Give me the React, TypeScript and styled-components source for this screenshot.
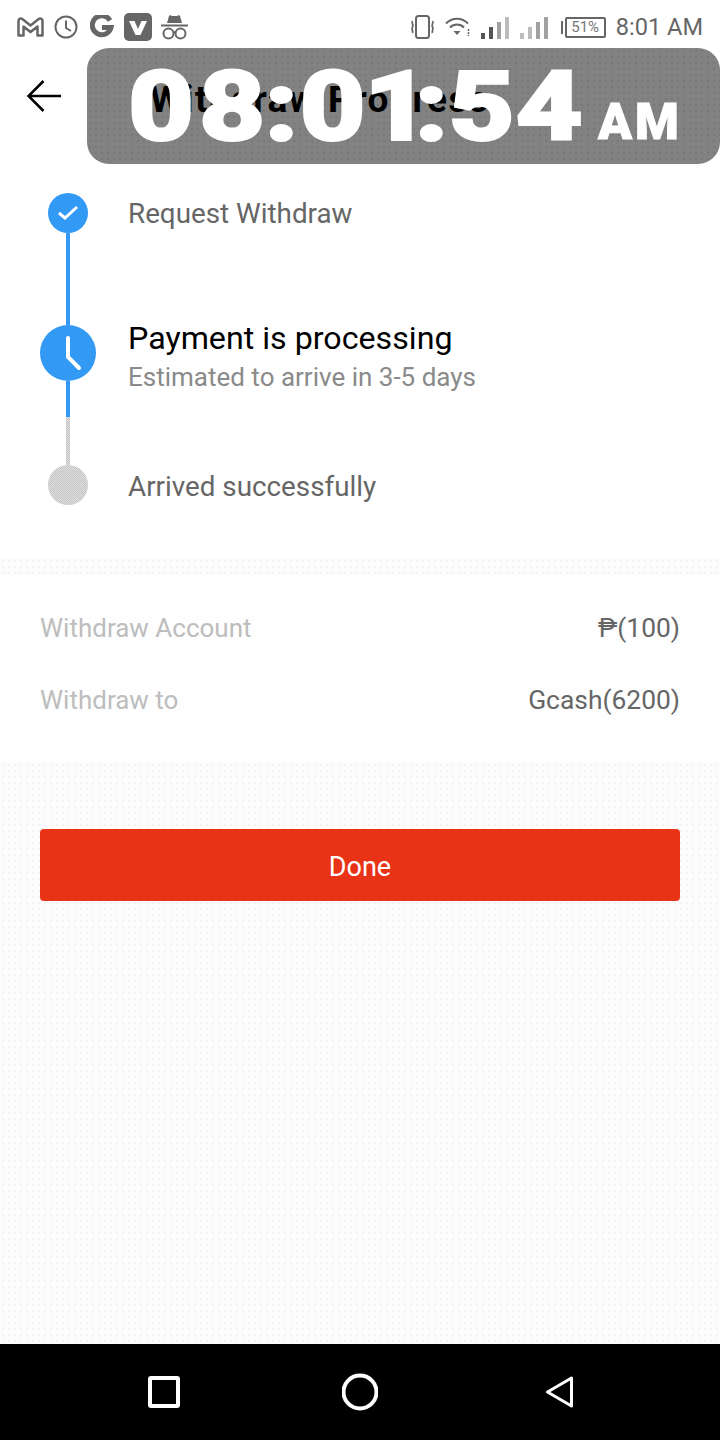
import React from "react";
import styled, { createGlobalStyle, css } from "styled-components";

const GlobalStyle = createGlobalStyle`
  html, body {
    margin: 0;
    padding: 0;
    background: #fcfcfc;
  }
  * {
    box-sizing: border-box;
  }
`;

// the capture is a dithered gif, light areas carry a sparse dot pattern
const lightDither = css`
  background-color: #fcfcfc;
  background-image: radial-gradient(#f3f3f3 0.8px, transparent 1px);
  background-size: 6px 6px;
`;

const greyDither = css`
  background-color: #d4d4d4;
  background-image: repeating-conic-gradient(#c8c8c8 0 25%, #dcdcdc 0 50%);
  background-size: 2px 2px;
`;

const Page = styled.div`
  position: relative;
  width: 720px;
  height: 1440px;
  display: flex;
  flex-direction: column;
  overflow: hidden;
  ${lightDither}
  font-family: Roboto, "Liberation Sans", sans-serif;
`;

const StatusBar = styled.div`
  height: 48px;
  flex-shrink: 0;
  display: flex;
  align-items: center;
  justify-content: space-between;
  padding: 6px 17px 0 17px;
  background: #fff;
  color: #666;
`;

const StatusGroup = styled.div`
  display: flex;
  align-items: center;
`;

const StatusIconSlot = styled.span<{ $after: number }>`
  display: flex;
  margin-right: ${(p) => p.$after}px;
`;

const StatusTime = styled.span`
  font-size: 23.6px;
  margin-left: 10px;
  color: #666;
  white-space: nowrap;
`;

const Header = styled.div`
  height: 116px;
  flex-shrink: 0;
  display: flex;
  align-items: center;
  padding: 0 0 20px 27px;
  background: #fff;
`;

const BackIcon = styled.svg`
  width: 34px;
  height: 32px;
  flex-shrink: 0;
`;

const Title = styled.h1`
  position: relative;
  z-index: 2;
  margin: 7px 0 0 89px;
  font-size: 37px;
  font-weight: 700;
  letter-spacing: 1.4px;
  color: #000;
  white-space: nowrap;
`;

const ClockBackdrop = styled.div`
  position: absolute;
  z-index: 1;
  top: 48px;
  left: 87px;
  right: 0;
  height: 116px;
  border-radius: 22px;
  background-color: #828282;
  background-image: radial-gradient(#787878 0.8px, transparent 1px);
  background-size: 6px 6px;
`;

const ClockFace = styled.div`
  position: absolute;
  z-index: 3;
  top: 49px;
  left: 125px;
  height: 116px;
  display: flex;
  align-items: baseline;
  color: #fff;
  font-weight: 700;
  line-height: 116px;
`;

const ClockGlyph = styled.span<{ $width: number }>`
  display: inline-block;
  width: ${(p) => p.$width}px;
  text-align: center;
  font-size: 94px;
  transform: scaleX(1.2);
  -webkit-text-stroke: 4px #fff;
`;

const ClockPeriod = styled.span`
  margin-left: 8px;
  font-size: 50px;
  font-weight: 900;
  letter-spacing: 3px;
  -webkit-text-stroke: 1px #fff;
`;

const Timeline = styled.section`
  flex-shrink: 0;
  padding: 29px 0 53px 40px;
  background: #fff;
`;

const Step = styled.div<{ $height: number }>`
  display: flex;
  gap: 32px;
  height: ${(p) => p.$height}px;
`;

const Rail = styled.div`
  width: 56px;
  flex-shrink: 0;
  display: flex;
  flex-direction: column;
  align-items: center;
`;

const Dot = styled.div<{ $size: number; $active?: boolean }>`
  width: ${(p) => p.$size}px;
  height: ${(p) => p.$size}px;
  flex-shrink: 0;
  border-radius: 50%;
  display: flex;
  align-items: center;
  justify-content: center;
  ${(p) => (p.$active ? "background: #3299f5;" : greyDither)}
`;

const Connector = styled.div<{ $length: number; $active?: boolean }>`
  width: 4px;
  height: ${(p) => p.$length}px;
  flex-shrink: 0;
  ${(p) => (p.$active ? "background: #3299f5;" : greyDither)}
`;

const StepLabel = styled.div<{ $nudge?: number }>`
  height: 40px;
  line-height: ${(p) => 42 + (p.$nudge ?? 0)}px;
  font-size: 27.8px;
  color: #666;
`;

const StepBody = styled.div`
  display: flex;
  flex-direction: column;
`;

const StepTitle = styled.div`
  margin-top: -5px;
  font-size: 32.2px;
  line-height: 36px;
  color: #000;
`;

const StepHint = styled.div`
  margin-top: 6px;
  font-size: 26px;
  line-height: 30px;
  color: #8a8a8a;
`;

const Divider = styled.div`
  height: 16px;
  flex-shrink: 0;
  ${lightDither}
`;

const Details = styled.section`
  flex-shrink: 0;
  padding: 18px 40px 26px;
  background: #fefefe;
`;

const DetailRow = styled.div`
  height: 72px;
  display: flex;
  align-items: center;
  justify-content: space-between;
`;

const DetailName = styled.span`
  font-size: 26px;
  color: #bdbdbd;
`;

const DetailValue = styled.span`
  font-size: 26.4px;
  color: #666;
`;

const DoneButton = styled.button`
  display: block;
  flex-shrink: 0;
  height: 72px;
  margin: 67px 40px 0;
  padding: 3px 0 0;
  border: 0;
  border-radius: 4px;
  background: #e83317;
  color: #fff;
  font: inherit;
  font-size: 27px;
`;

const NavBar = styled.nav`
  margin-top: auto;
  height: 96px;
  flex-shrink: 0;
  display: flex;
  align-items: center;
  justify-content: space-between;
  padding: 0 146px 0 146px;
  background: #000;
`;

const NavIcon = styled.svg`
  width: 36px;
  height: 40px;
`;

const Battery = styled.div`
  position: relative;
  width: 41px;
  height: 21px;
  margin-left: 6px;
  border: 2px solid #666;
  border-radius: 2px;
  display: flex;
  align-items: center;
  justify-content: center;
  font-size: 15px;
  color: #777;

  &::before {
    content: "";
    position: absolute;
    left: -6px;
    top: 2px;
    width: 2px;
    height: 13px;
    background: #666;
  }
`;

const GmailIcon = () => (
  <svg width="27" height="20" viewBox="0 0 27 20" fill="none" stroke="#666" strokeWidth="2.500" strokeLinejoin="round">
    <path d="M1.500 18.500V4c0-2.500 2.500-3 3.800-2l8.200 6.500L21.700 2c1.300-1 3.800-.5 3.800 2v14.500h-5V9.500l-7 5.500-7-5.500v9z" />
  </svg>
);

const ClockIcon = () => (
  <svg width="24" height="24" viewBox="0 0 24 24" fill="none" stroke="#666" strokeWidth="2">
    <circle cx="12" cy="12" r="10.500" />
    <path d="M12 5.500V13l5 3" />
  </svg>
);

const GoogleIcon = () => (
  <svg width="24" height="24" viewBox="0 0 24 24" fill="none" stroke="#666" strokeWidth="5">
    <path d="M20 5.500A9.500 9.500 0 1 0 21 12.500H12" />
  </svg>
);

const VpnIcon = () => (
  <svg width="28" height="28" viewBox="0 0 28 28">
    <rect width="28" height="28" rx="5" fill="#666" />
    <path d="M5 8h5.500l3.500 8 3.500-8H23l-6.500 14h-5z" fill="#fff" />
  </svg>
);

const IncognitoIcon = () => (
  <svg width="27" height="26" viewBox="0 0 27 26" fill="none" stroke="#666">
    <path d="M6 9l2-7c.2-.8 1-1 1.600-.7l1.400.7h5l1.400-.7c.6-.3 1.400-.1 1.600.7l2 7z" fill="#666" stroke="none" />
    <path d="M0 11.500h27" strokeWidth="2" />
    <circle cx="7.500" cy="19.500" r="5" strokeWidth="2" />
    <circle cx="19.500" cy="19.500" r="5" strokeWidth="2" />
    <path d="M12.500 18.500c1-.7 1-.7 2 0" strokeWidth="2" />
  </svg>
);

const VibrateIcon = () => (
  <svg width="25" height="24" viewBox="0 0 25 24" fill="none" stroke="#666" strokeWidth="2">
    <rect x="6" y="1" width="13" height="22" rx="2.500" />
    <path d="M2.500 6c-1.500 2 1.500 4 0 6s1 4 0 6M22.500 6c1.500 2-1.500 4 0 6s-1 4 0 6" strokeWidth="1.800" />
  </svg>
);

const WifiIcon = () => (
  <svg width="26" height="22" viewBox="0 0 26 22" fill="none" stroke="#666" strokeWidth="2">
    <path d="M1 7.500c6-6.500 16-6.500 22 0M5 11.500c4-4 10-4 14 0" />
    <path d="M8.500 15h7L12 19z" fill="#666" stroke="none" />
    <path d="M23.500 13v7" strokeWidth="1.500" strokeDasharray="2 1" />
  </svg>
);

const barHeights = [6, 12, 17, 22];

const SignalIcon = ({ colors }: { colors: string[] }) => (
  <svg width="29" height="24" viewBox="0 0 29 24">
    {barHeights.map((h, i) => (
      <rect key={i} x={i * 8} y={24 - h} width="4" height={h} fill={colors[i]} />
    ))}
  </svg>
);

const clockGlyphs: [string, number][] = [
  ["0", 72],
  ["8", 70],
  [":", 29],
  ["0", 73],
  ["1", 40],
  [":", 45],
  ["5", 54],
  ["4", 82],
];

export default function App() {
  return (
    <>
      <GlobalStyle />
      <Page>
        <StatusBar>
          <StatusGroup>
            <StatusIconSlot $after={10}>
              <GmailIcon />
            </StatusIconSlot>
            <StatusIconSlot $after={12}>
              <ClockIcon />
            </StatusIconSlot>
            <StatusIconSlot $after={10}>
              <GoogleIcon />
            </StatusIconSlot>
            <StatusIconSlot $after={9}>
              <VpnIcon />
            </StatusIconSlot>
            <IncognitoIcon />
          </StatusGroup>
          <StatusGroup>
            <StatusIconSlot $after={10}>
              <VibrateIcon />
            </StatusIconSlot>
            <StatusIconSlot $after={10}>
              <WifiIcon />
            </StatusIconSlot>
            <StatusIconSlot $after={10}>
              <SignalIcon colors={["#555", "#555", "#a0a0a0", "#bcbcbc"]} />
            </StatusIconSlot>
            <StatusIconSlot $after={10}>
              <SignalIcon colors={["#bcbcbc", "#bcbcbc", "#a0a0a0", "#a0a0a0"]} />
            </StatusIconSlot>
            <Battery>51%</Battery>
            <StatusTime>8:01 AM</StatusTime>
          </StatusGroup>
        </StatusBar>

        <Header>
          <BackIcon viewBox="0 0 34 32" fill="none" stroke="#000" strokeWidth="2.500">
            <path d="M34 16H2M16.500 1L1.500 16l15 15" />
          </BackIcon>
          <Title>Withdraw Progress</Title>
        </Header>
        <ClockBackdrop />
        <ClockFace>
          {clockGlyphs.map(([glyph, width], i) => (
            <ClockGlyph key={i} $width={width}>
              {glyph}
            </ClockGlyph>
          ))}
          <ClockPeriod>AM</ClockPeriod>
        </ClockFace>

        <Timeline>
          <Step $height={132}>
            <Rail>
              <Dot $size={40} $active>
                <svg width="22" height="18" viewBox="0 0 22 18" fill="none" stroke="#fff" strokeWidth="3">
                  <path d="M2 9l6 5L20 3" />
                </svg>
              </Dot>
              <Connector $length={92} $active />
            </Rail>
            <StepLabel>Request Withdraw</StepLabel>
          </Step>
          <Step $height={140}>
            <Rail>
              <Dot $size={56} $active>
                <svg width="56" height="56" viewBox="0 0 56 56" fill="none" stroke="#fff" strokeWidth="4" strokeLinecap="round">
                  <path d="M28 13v19l11 11" />
                </svg>
              </Dot>
              <Connector $length={36} $active />
              <Connector $length={48} />
            </Rail>
            <StepBody>
              <StepTitle>Payment is processing</StepTitle>
              <StepHint>Estimated to arrive in 3-5 days</StepHint>
            </StepBody>
          </Step>
          <Step $height={40}>
            <Rail>
              <Dot $size={40} />
            </Rail>
            <StepLabel $nudge={2}>Arrived successfully</StepLabel>
          </Step>
        </Timeline>

        <Divider />
        <Details>
          <DetailRow>
            <DetailName>Withdraw Account</DetailName>
            <DetailValue>₱(100)</DetailValue>
          </DetailRow>
          <DetailRow>
            <DetailName>Withdraw to</DetailName>
            <DetailValue>Gcash(6200)</DetailValue>
          </DetailRow>
        </Details>

        <DoneButton>Done</DoneButton>

        <NavBar>
          <NavIcon viewBox="0 0 36 40" fill="none" stroke="#fff" strokeWidth="4" strokeLinejoin="round">
            <rect x="4" y="6" width="28" height="28" rx="1" />
          </NavIcon>
          <NavIcon viewBox="0 0 36 40" fill="none" stroke="#fff" strokeWidth="4">
            <circle cx="18" cy="20" r="16.500" />
          </NavIcon>
          <NavIcon viewBox="0 0 36 40" fill="none" stroke="#fff" strokeWidth="3" strokeLinejoin="round">
            <path d="M33.500 6v28L9.500 20z" />
          </NavIcon>
        </NavBar>
      </Page>
    </>
  );
}
